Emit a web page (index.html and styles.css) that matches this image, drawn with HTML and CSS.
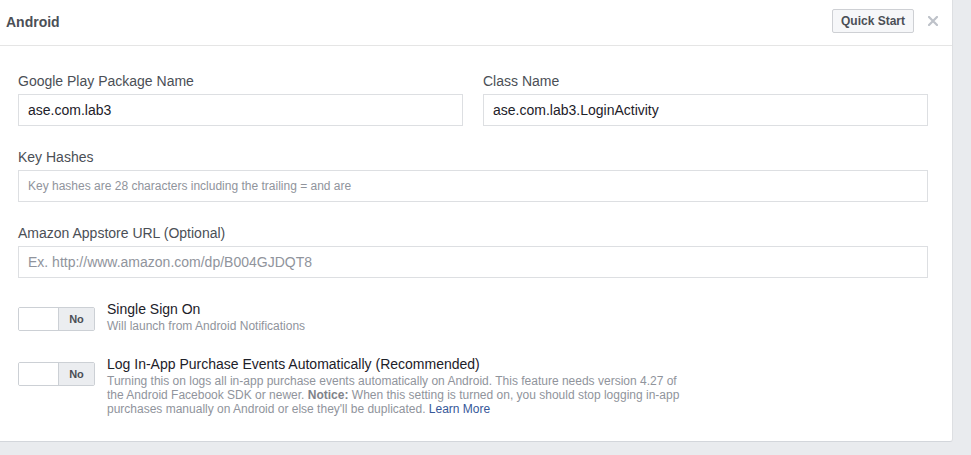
FILE: index.html
```html
<!DOCTYPE html>
<html>
<head>
<meta charset="utf-8">
<link rel="stylesheet" href="styles.css">
</head>
<body>
<div class="page">
  <div class="card">
    <div class="card-header">
      <div class="title">Android</div>
      <div class="header-actions">
        <div class="btn">Quick Start</div>
        <svg class="close" width="10" height="10" viewBox="0 0 10 10"><path d="M1 1 L9 9 M9 1 L1 9" stroke="#bec2c9" stroke-width="2.2" stroke-linecap="square"/></svg>
      </div>
    </div>
    <div class="card-body">
      <div class="row two">
        <div class="field">
          <div class="label">Google Play Package Name</div>
          <div class="input">ase.com.lab3</div>
        </div>
        <div class="field">
          <div class="label">Class Name</div>
          <div class="input">ase.com.lab3.LoginActivity</div>
        </div>
      </div>
      <div class="field">
        <div class="label">Key Hashes</div>
        <div class="input small placeholder">Key hashes are 28 characters including the trailing = and are</div>
      </div>
      <div class="field">
        <div class="label">Amazon Appstore URL (Optional)</div>
        <div class="input placeholder">Ex. http://www.amazon.com/dp/B004GJDQT8</div>
      </div>
      <div class="switch-row">
        <div class="toggle"><span class="toggle-on"></span><span class="toggle-off">No</span></div>
        <div class="switch-text">
          <div class="switch-title">Single Sign On</div>
          <div class="switch-desc">Will launch from Android Notifications</div>
        </div>
      </div>
      <div class="switch-row">
        <div class="toggle"><span class="toggle-on"></span><span class="toggle-off">No</span></div>
        <div class="switch-text">
          <div class="switch-title">Log In-App Purchase Events Automatically (Recommended)</div>
          <div class="switch-desc wide">Turning this on logs all in-app purchase events automatically on Android. This feature needs version 4.27 of the Android Facebook SDK or newer. <b>Notice:</b> When this setting is turned on, you should stop logging in-app purchases manually on Android or else they'll be duplicated. <a class="link">Learn More</a></div>
        </div>
      </div>
    </div>
  </div>
</div>
</body>
</html>
```

FILE: styles.css
```css
html, body {
  margin: 0;
  padding: 0;
  background: #e9ebee;
  font-family: "Liberation Sans", Arial, Helvetica, sans-serif;
}

.page {
  width: 971px;
  height: 455px;
  overflow: hidden;
}

.card {
  width: 953px;
  background: #fff;
  border-right: 1px solid #dddfe2;
  border-bottom: 1px solid #d3d6db;
  border-radius: 0 0 3px 0;
  box-sizing: border-box;
}

.card-header {
  height: 46px;
  box-sizing: border-box;
  border-bottom: 1px solid #e5e5e5;
  display: flex;
  align-items: center;
  justify-content: space-between;
  padding: 0 14px 0 6px;
}

.title {
  font-size: 14px;
  font-weight: bold;
  color: #4b4f56;
  margin-top: -2px;
}

.header-actions {
  display: flex;
  align-items: center;
  margin-top: -3px;
}

.btn {
  height: 24px;
  box-sizing: border-box;
  padding: 0 8px;
  border: 1px solid #ced0d4;
  border-radius: 2px;
  background: #f6f7f9;
  color: #4b4f56;
  font-size: 12px;
  font-weight: bold;
  line-height: 22px;
}

.close {
  margin-left: 14px;
}

.card-body {
  padding: 26px 24px 25px 18px;
  display: flex;
  flex-direction: column;
  gap: 22px;
}

.row.two {
  display: grid;
  grid-template-columns: 1fr 1fr;
  gap: 20px;
}

.field {
  display: flex;
  flex-direction: column;
}

.label {
  font-size: 14px;
  line-height: 18px;
  color: #4b4f56;
  margin-bottom: 4px;
}

.input {
  height: 32px;
  box-sizing: border-box;
  border: 1px solid #dddfe2;
  padding: 0 9px;
  font-size: 14px;
  line-height: 30px;
  color: #1d2129;
  white-space: nowrap;
  overflow: hidden;
}

.input.placeholder {
  color: #90949c;
}

.input.small {
  font-size: 12px;
}

.switch-row {
  display: flex;
  align-items: flex-start;
}

.toggle {
  margin-top: 7px;
  width: 77px;
  height: 24px;
  box-sizing: border-box;
  border: 1px solid #ccd0d5;
  border-radius: 2px;
  display: flex;
  overflow: hidden;
  flex-shrink: 0;
}

.toggle-on {
  width: 39px;
  background: #fff;
  border-right: 1px solid #ccd0d5;
}

.toggle-off {
  flex: 1;
  background: #ebedf0;
  color: #4b4f56;
  font-size: 11px;
  font-weight: bold;
  text-align: center;
  line-height: 22px;
}

.switch-text {
  margin-left: 12px;
}

.switch-title {
  font-size: 14px;
  line-height: 18px;
  color: #1d2129;
}

.switch-desc {
  margin-top: 1px;
  font-size: 12px;
  line-height: 14px;
  color: #90949c;
}

.switch-desc.wide {
  width: 580px;
}

.switch-desc b {
  color: #7f838a;
}

.link {
  color: #365899;
}
```
